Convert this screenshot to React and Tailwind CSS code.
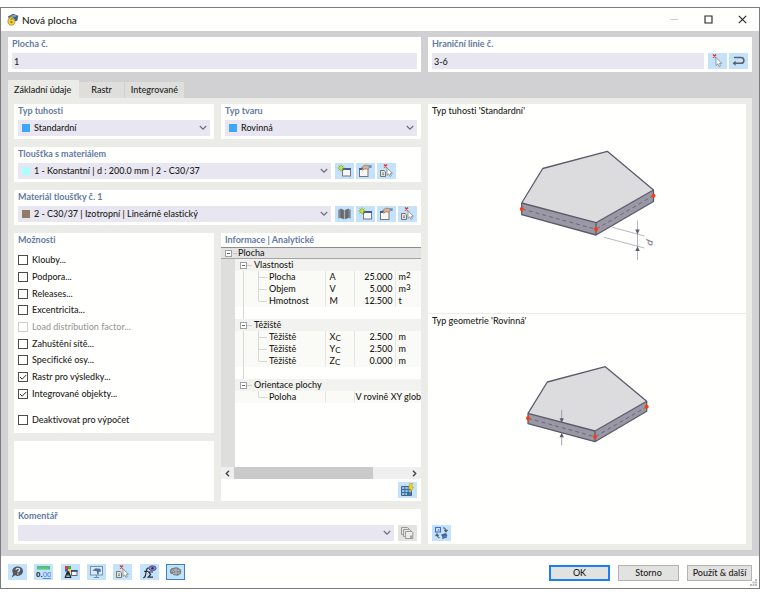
import { useState } from "react";

const OPTIONS = [
  { label: "Klouby..." },
  { label: "Podpora..." },
  { label: "Releases..." },
  { label: "Excentricita..." },
  { label: "Load distribution factor...", disabled: true },
  { label: "Zahuštění sítě..." },
  { label: "Specifické osy..." },
  { label: "Rastr pro výsledky...", checked: true },
  { label: "Integrované objekty...", checked: true },
];

const GROUPS = [
  {
    title: "Vlastnosti",
    rows: [
      { name: "Plocha", symbol: "A", value: "25.000", unit: "m", sup: "2" },
      { name: "Objem", symbol: "V", value: "5.000", unit: "m", sup: "3" },
      { name: "Hmotnost", symbol: "M", value: "12.500", unit: "t" },
    ],
  },
  {
    title: "Těžiště",
    rows: [
      { name: "Těžiště", symbol: "X", sub: "C", value: "2.500", unit: "m" },
      { name: "Těžiště", symbol: "Y", sub: "C", value: "2.500", unit: "m" },
      { name: "Těžiště", symbol: "Z", sub: "C", value: "0.000", unit: "m" },
    ],
  },
  {
    title: "Orientace plochy",
    rows: [{ name: "Poloha", text: "V rovině XY glob" }],
  },
];

/* ---------- icons ---------- */

function Icon({ children, w = 15, h = 14 }) {
  return (
    <svg width={w} height={h} viewBox={`0 0 ${w} ${h}`} fill="none" aria-hidden="true">
      {children}
    </svg>
  );
}

const AppIcon = () => (
  <Icon w={12} h={13}>
    <path d="M1 3.5 6 .8l5.3 2-1 5-2.3.5L7 5.5 2 6z" fill="#3f5f8c" />
    <path d="M3 3.2 7 1.6l3 1.2-3 1.6z" fill="#7f9cc0" />
    <path d="M5.8 3.6C3 3.4.9 5.8.9 8.6c0 2.2 1.4 3.6 3.4 3.6s3.6-1.3 3.6-3.2c0-1.7-1.2-2.8-2.6-2.8-.8 0-1.4.3-1.8.8.2-1 1-1.7 2.3-1.7z" fill="#f3d433" stroke="#9a7d17" strokeWidth=".7" />
    <circle cx="4.4" cy="9.1" r="1.1" fill="#8a7430" />
  </Icon>
);

const RedX = ({ x = 5, y = 0 }) => (
  <path d={`M${x} ${y + 0.5}l3 3m0-3l-3 3`} stroke="#ee2a20" strokeWidth="1.3" />
);

const PickIcon = () => (
  <Icon>
    <RedX x={3} />
    <path d="M6 3.5v8l1.8-1.6 1.2 2.6 1.5-.7-1.2-2.5h2.4z" fill="#fff" stroke="#7b8088" strokeWidth=".8" />
  </Icon>
);

const ReturnIcon = () => (
  <Icon>
    <path d="M3 3.5h7a2.8 2.8 0 0 1 0 5.8H3" stroke="#5c5f65" strokeWidth="1.5" />
    <path d="M4.6 6.8 1.6 9.3l3 2.5z" fill="#5c5f65" />
  </Icon>
);

const NewIcon = () => (
  <Icon>
    <rect x="5.5" y="4.5" width="8" height="7.5" fill="#f6f6f4" stroke="#77777c" />
    <path d="M5 4h9v2H5z" fill="#4a5a92" />
    <path d="M4 .5v7M.5 4h7M1.6 1.6l4.8 4.8M6.4 1.6 1.6 6.4" stroke="#7fae1c" strokeWidth="1" />
    <circle cx="4" cy="4" r="1.4" fill="#d6e820" />
  </Icon>
);

const EditIcon = () => (
  <Icon>
    <rect x="1.5" y="4.5" width="8.5" height="8" fill="#f6f6f4" stroke="#77777c" />
    <path d="M1 4h5v2H1z" fill="#4a5a92" />
    <path d="M3.5 3.6 6.5 1.2l4 .2 1 2-2 1.8-2.6-.4-2.2 1.4-1-.8 1.4-1.3z" fill="#d9b294" stroke="#7d6150" strokeWidth=".6" />
    <path d="M10.5 1.2h3.2v2.6l-2.6.2z" fill="#6d8fbd" />
  </Icon>
);

const SelectIcon = () => (
  <Icon>
    <path d="M1.5 6.5h3.6l1.4 1.4v4.6h-5z" fill="#e9e6df" stroke="#6d6a66" strokeWidth=".9" />
    <path d="M3 9h2M3 10.6h2" stroke="#6d6a66" strokeWidth=".8" />
    <RedX x={5} />
    <path d="M8 3.8v7.6l1.7-1.5 1.2 2.5 1.4-.7-1.1-2.4h2.2z" fill="#fff" stroke="#7b8088" strokeWidth=".8" />
  </Icon>
);

const LibraryIcon = () => (
  <Icon>
    <path d="M1.500 2.500h1.200v8.700H1.500zM3.200 1.500 6.900 3v9.300L3.200 10.800zM11.800 1.500 8.100 3v9.300l3.700-1.500zM12.300 2.500h1.200v8.700h-1.200z" fill="#606369" />
    <path d="M6.900 3v9.300h1.200V3z" fill="#a9b4bf" />
    <path d="M5 2.300v9.200M10 2.300v9.200" stroke="#7b7f86" strokeWidth=".5" />
  </Icon>
);

const TableIcon = () => (
  <Icon>
    <path d="M1.5 3.5h10v9h-10z" fill="#8fc4f0" stroke="#3c6490" />
    <path d="M7 9h4v3.5H7z" fill="#47729e" />
    <path d="M1.5 6.5h10M1.5 9.5h10M4.8 3.5v9M8.2 3.5v9" stroke="#3c6490" strokeWidth=".9" />
    <path d="M9.6.5h3l-.8 3.6h1.8L10.2 10l.6-4H8.6z" fill="#f6d51c" stroke="#b9971a" strokeWidth=".5" />
  </Icon>
);

const CopyIcon = () => (
  <Icon>
    <path d="M1.5 1.5h6l1.5 1.5v5.5H1.5z" fill="#e4e4e2" stroke="#9b9b99" />
    <path d="M3.5 3.5h6L11 5v5.5H3.5z" fill="#e4e4e2" stroke="#9b9b99" />
    <path d="M5.5 5.5H12l.8 1v6H5.5z" fill="#ececea" stroke="#9b9b99" />
    <path d="M10 9.5h2.4v2.6H10z" fill="#a3a3a1" />
  </Icon>
);

const HelpIcon = () => (
  <Icon>
    <path d="M7.6 1.5c3 0 5.4 1.8 5.4 4.6s-2.4 4.8-5.3 4.8c-1 0-1.8-.2-2.6-.6L1.6 12.6l1.6-3.9C2.6 8 2.3 7.1 2.3 6.1c0-2.8 2.4-4.6 5.3-4.6z" fill="#54585d" />
    <path d="M5.9 4.9c.1-1 .9-1.5 1.9-1.5s1.9.6 1.9 1.5c0 1.2-1.7 1.2-1.8 2.5M7.8 8.3v1.2" stroke="#d5e9f8" strokeWidth="1.2" />
  </Icon>
);

const UnitsIcon = () => (
  <Icon>
    <path d="M1 1h13v3.6H1z" fill="#4cc07a" />
    <path d="M3 2.5v2M5 3v1.6M7 2.5v2M9 3v1.6M11 2.5v2" stroke="#8fdcae" strokeWidth=".6" />
    <text x="0" y="12" fontSize="8" fontWeight="700" fontFamily="Liberation Sans, sans-serif" fill="#23262b">
      0.<tspan fill="#4179e0" fontWeight="400" textDecoration="underline">00</tspan>
    </text>
  </Icon>
);

const ViewIcon = () => (
  <Icon>
    <path d="M2 1h3v3H2z" fill="#e23b2e" />
    <path d="M5 1h3v3H5z" fill="#3bab3f" />
    <path d="M2 4h3v2.5H2z" fill="#3a62d8" />
    <path d="M5 4h3v2.5H5z" fill="#f2d22b" />
    <path d="M4.5 6.5 2 13M5.5 6.5 8 13M3.2 10h3.6M2.5 12.3h5M5 6v4" stroke="#25272c" strokeWidth="1.2" />
    <rect x="8.5" y="5.5" width="5.5" height="5" fill="#f6f6f4" stroke="#5b5b60" strokeWidth=".9" />
    <path d="M8 5h6.5v1.8H8z" fill="#36457c" />
  </Icon>
);

const DisplayIcon = () => (
  <Icon>
    <rect x="1.5" y="1.5" width="12" height="8.500" fill="#d9ecfa" stroke="#7590aa" />
    <path d="M5 12.500h5M7.500 10v2.500" stroke="#7590aa" strokeWidth="1.2" />
    <path d="M3 6 6.500 3.200 11.500 3.800 12 6.500 9.800 7v2.200H8.200L8 6.400 5.600 5.800z" fill="#4f7195" />
  </Icon>
);

const FormulaIcon = () => (
  <Icon>
    <path d="M6.8 3.2C5.2 2.6 4.7 4 4.4 5.5L3.3 11c-.3 1.3-1 1.8-2 1.4M2.2 6.3h4" stroke="#2b2d33" strokeWidth="1.2" />
    <path d="M11 7H6.600l2 2.500-2.400 2.700H11" stroke="#2b2d33" strokeWidth="1.2" />
    <ellipse cx="10.5" cy="3.2" rx="3.6" ry="2.4" fill="#8e8fc9" stroke="#45477e" strokeWidth=".9" />
    <circle cx="10.5" cy="3.2" r="1.2" fill="#2b2c58" />
  </Icon>
);

const BrainIcon = () => (
  <Icon>
    <path d="M1.8 6.5C1.8 4 3.8 2.6 6 2.8c1.5-.8 4-.6 5.2.6 1.6.4 2.3 2 2 3.4.3 1.7-.8 2.9-2.2 2.9-.6 1.2-2.2 1.5-3.2.6-1.4.6-2.8 0-3.2-1.2-1.7.2-2.8-.9-2.8-2.6z" fill="#7d8085" />
    <path d="M3.5 6.2c1-.9 2-.3 2 .8M5.5 4.5c1 0 1.5.7 1.3 1.5M8 3.5v6M9.3 5.2c1-.6 1.8 0 1.7.9M9.500 8c.8.500 1.700.2 2-.6M5 8.600c.7-.7 1.600-.4 1.900.3" stroke="#d5e9f8" strokeWidth=".8" />
  </Icon>
);

const SwapIcon = () => (
  <Icon>
    <rect x="1.5" y="1.5" width="5" height="4.5" fill="#dcebfb" stroke="#3c6fd6" strokeWidth="1.1" />
    <path d="m3 4.500 1.500-1.600L6 4.500z" fill="#3c6fd6" />
    <path d="M9 1.800c2.200 0 3 1.200 3 3M10.300 4.200 12 6.200l1.500-2z" stroke="#55585e" strokeWidth="1" fill="#55585e" fillOpacity=".5" />
    <path d="M3 8.800c0 2 .8 3 2.600 3M1.600 9.600 3 7.600l1.500 2z" stroke="#55585e" strokeWidth="1" fill="#55585e" fillOpacity=".5" />
    <path d="m7 8.500 5-1.500 1.500 2.500-5 1.800zM8 11.600l5-1.600v1.500l-4.500 1.500z" fill="#4666a5" />
  </Icon>
);

const Chevron = () => (
  <svg className="pointer-events-none absolute right-[3px] top-[5px]" width="8" height="6" viewBox="0 0 8 6" fill="none" aria-hidden="true">
    <path d="m.8 1 3.200 3.200L7.200 1" stroke="#6c6c74" strokeWidth="1.1" />
  </svg>
);

/* ---------- small building blocks ---------- */

function IconButton({ label, children, tone = "bg-[#c4e3fa]" }) {
  return (
    <button type="button" aria-label={label} className={`flex h-4 w-[19px] shrink-0 items-center justify-center ${tone}`}>
      {children}
    </button>
  );
}

function Panel({ title, htmlFor, className = "", children }) {
  return (
    <section className={`bg-[#fffffd] px-1 pb-[3px] ${className}`}>
      <label htmlFor={htmlFor} className="block h-4 leading-[14px] font-bold text-[#647ba3]">{title}</label>
      {children}
    </section>
  );
}

function TextField({ id, value }) {
  return (
    <input id={id} defaultValue={value} className="h-4 w-full min-w-0 flex-1 bg-[#e8e6f1] px-[2px] text-[#1d1d20] outline-none" />
  );
}

function Dropdown({ id, value, swatch }) {
  return (
    <div className="relative min-w-0 flex-1 bg-[#e8e6f1]">
      {swatch && <span className={`absolute left-1 top-1 size-2 ${swatch}`} />}
      <select id={id} className="block h-4 w-full appearance-none bg-transparent pl-4 pr-3 outline-none">
        <option>{value}</option>
      </select>
      <Chevron />
    </div>
  );
}

function CheckRow({ label, checked = false, disabled = false }) {
  return (
    <label className={`flex items-center gap-1 ${disabled ? "text-[#9a9a9a]" : ""}`}>
      <span className="grid size-[10px] shrink-0">
        <input
          type="checkbox"
          defaultChecked={checked}
          disabled={disabled}
          className="peer col-start-1 row-start-1 size-[10px] appearance-none border border-[#4c4c4c] bg-white disabled:border-[#cfcfcf]"
        />
        <svg className="pointer-events-none invisible col-start-1 row-start-1 peer-checked:visible" width="10" height="10" viewBox="0 0 10 10" fill="none">
          <path d="m2 5 2.200 2.200L8.200 3" stroke="#2f2f2f" />
        </svg>
      </span>
      {label}
    </label>
  );
}

/* ---------- property tree ---------- */

function Toggle({ label }) {
  return (
    <button type="button" aria-label={label} className="flex size-[7px] shrink-0 items-center justify-center border border-[#a0a0a0] bg-white">
      <span className="h-px w-[3px] bg-[#666]" />
    </button>
  );
}

function Branch({ last, deep }) {
  return (
    <svg className="shrink-0" width="32" height="12" viewBox="0 0 32 12" fill="none" stroke="#d8d8d6" aria-hidden="true">
      {deep && <path d="M8.500 0v12" />}
      <path d={last ? "M23.500 0v6.500H32" : "M23.500 0v12M23.500 6.500H32"} />
    </svg>
  );
}

function PropertyTree() {
  return (
    <div className="flex-1 overflow-hidden bg-[linear-gradient(to_right,#dededd_14px,#fffffd_14px)]">
      <table className="w-full table-fixed border-collapse text-left leading-3">
        <colgroup>
          <col className="w-[14px]" />
          <col className="w-[90px]" />
          <col className="w-[29px]" />
          <col className="w-[41px]" />
          <col />
        </colgroup>
        <tbody>
          <tr className="h-3 bg-[#e3e3e3] shadow-[inset_0_1px_#8d8d8d,inset_0_-1px_#a5a5a5]">
            <th colSpan={5} className="p-0 font-medium">
              <div className="flex h-3 items-center pl-1">
                <Toggle label="Plocha" />
                <span className="ml-px h-px w-1 bg-[#c4c4c4]" />
                <span className="pl-px">Plocha</span>
              </div>
            </th>
          </tr>
          {GROUPS.map((group, i) => (
            <Group key={group.title} group={group} last={i === GROUPS.length - 1} />
          ))}
        </tbody>
      </table>
    </div>
  );
}

function Group({ group, last }) {
  return (
    <>
      <tr className="h-3">
        <td className="p-0" />
        <th colSpan={4} className="bg-[#f2f2f0] p-0 font-medium">
          <div className="flex h-3 items-center pl-[5px]">
            <Toggle label={group.title} />
            <span className="h-px w-[5px] bg-[#cfcfcd]" />
            <span className="pl-[2px]">{group.title}</span>
          </div>
        </th>
      </tr>
      {group.rows.map((row, i) => (
        <tr key={i} className="h-3">
          <td className="p-0" />
          <td className="bg-[#fafaf6] p-0">
            <div className="flex h-3 items-center gap-[2px]">
              <Branch deep={!last} last={i === group.rows.length - 1} />
              {row.name}
            </div>
          </td>
          <td className="border-l border-[#e6e6e4] bg-[#fafaf6] p-0 pl-1">
            <div className="h-3">
              {row.symbol}
              {row.sub && <sub className="bottom-[-1px] text-[8px] leading-none">{row.sub}</sub>}
            </div>
          </td>
          {row.text ? (
            <td colSpan={2} className="border-l border-[#e6e6e4] bg-[#fafaf6] p-0 pl-px">
              <div className="h-3 whitespace-nowrap">{row.text}</div>
            </td>
          ) : (
            <>
              <td className="border-l border-[#e6e6e4] bg-[#fafaf6] p-0 pr-[2px] text-right">{row.value}</td>
              <td className="border-l border-[#e6e6e4] bg-[#fafaf6] p-0 pl-[3px]">
                <div className="h-3">
                  {row.unit}
                  {row.sup && <sup className="top-[-2px] text-[8px] leading-none">{row.sup}</sup>}
                </div>
              </td>
            </>
          )}
        </tr>
      ))}
      {!last && (
        <tr className="h-3">
          <td className="p-0" />
          <td colSpan={4} className="p-0">
            <div className="ml-2 h-3 w-px bg-[#d8d8d6]" />
          </td>
        </tr>
      )}
    </>
  );
}

function Scrollbar() {
  return (
    <div className="flex h-3 items-center bg-[#efefef]">
      <button type="button" aria-label="Doleva" className="flex w-[13px] justify-center">
        <svg width="5" height="7" viewBox="0 0 5 7" fill="none"><path d="M4 .8 1.300 3.500 4 6.200" stroke="#444" strokeWidth="1.4" /></svg>
      </button>
      <div className="flex h-full flex-1">
        <span className="h-full w-4/5 bg-[#cacaca]" />
      </div>
      <button type="button" aria-label="Doprava" className="flex w-[13px] justify-center">
        <svg width="5" height="7" viewBox="0 0 5 7" fill="none"><path d="M1 .8 3.700 3.500 1 6.200" stroke="#444" strokeWidth="1.4" /></svg>
      </button>
    </div>
  );
}

/* ---------- plate drawings ---------- */

function PlateStiffness() {
  return (
    <svg className="mx-auto block" width="160" height="130" viewBox="507 140 160 130" fill="none" strokeLinejoin="round" aria-hidden="true">
      <path d="M521.700 203 596 222.700V235l-74.300-20.300z" fill="#9a98a5" />
      <path d="M596 222.700 653.500 190v11.500L596 235z" fill="#9a98a5" />
      <path d="m542.700 168.500 64.600-17.200 46.200 38.700L596 222.700 521.700 203z" fill="#dcdcdf" />
      <path d="m542.700 168.500 64.600-17.200 46.200 38.700v11.500L596 235l-74.300-20.300V203zM521.700 203 596 222.700 653.500 190M596 222.700V235" stroke="#5d5a6b" strokeWidth="1.3" />
      <path d="m522 209 74 20.300 57-33.500" stroke="#5d5a6b" strokeWidth=".8" strokeDasharray="4 3" />
      <path d="m612.500 227.300 32 8.700M604 237.300l40.300 10.700M637.500 220.500V260" stroke="#a5a3ae" strokeWidth=".8" />
      <path d="m635.300 229.500 2.200 4.700 2.200-4.700zM635.300 251l2.200-4.700 2.200 4.700z" fill="#5d5a6b" />
      <circle cx="521.7" cy="209" r="2" fill="#ff3b0a" />
      <circle cx="596" cy="229.300" r="2" fill="#ff3b0a" />
      <circle cx="653.5" cy="195.700" r="2" fill="#ff3b0a" />
      <text x="652" y="246" transform="rotate(-75 652 246)" fontSize="10" fontStyle="italic" fill="#7d7b88">d</text>
    </svg>
  );
}

function PlateGeometry() {
  return (
    <svg className="mx-auto block" width="160" height="110" viewBox="507 350 160 110" fill="none" strokeLinejoin="round" aria-hidden="true">
      <path d="M528 413.300 595 431v10.700l-67-18z" fill="#9a98a5" />
      <path d="M595 431 646.700 401.300v10L595 441.700z" fill="#9a98a5" />
      <path d="m547.300 382 58-15.300 41.400 34.600L595 431l-67-17.700z" fill="#dcdcdf" />
      <path d="m547.300 382 58-15.300 41.400 34.600v10L595 441.700l-67-18v-10.400zM528 413.300 595 431l51.700-29.700M595 431v10.700" stroke="#5d5a6b" strokeWidth="1.3" />
      <path d="m528 418.300 67 18.500 51.700-30" stroke="#5d5a6b" strokeWidth=".8" strokeDasharray="4 3" />
      <path d="M561.700 410v10M561.700 436v9.500" stroke="#8e8c99" strokeWidth=".8" />
      <path d="m559.500 418.300 2.200 4.500 2.200-4.500zM559.500 437.300l2.200-4.500 2.200 4.500z" fill="#5d5a6b" />
      <circle cx="528" cy="418.300" r="2" fill="#ff3b0a" />
      <circle cx="595" cy="437" r="2" fill="#ff3b0a" />
      <circle cx="646.7" cy="406.700" r="2" fill="#ff3b0a" />
    </svg>
  );
}

/* ---------- dialog ---------- */

const TABS = ["Základní údaje", "Rastr", "Integrované"];

export default function App() {
  const [tab, setTab] = useState(TABS[0]);

  return (
    <main className="mt-[7px] border border-[#7c7c7e] bg-[#fffffd] font-['Lato','Noto_Sans',sans-serif] text-[9px] font-medium leading-3 text-[#1d1d20] [font-variant-ligatures:none]">
      {/* Title bar */}
      <header className="flex h-[23px] items-center pl-[6px] pr-3">
        <AppIcon />
        <h1 className="ml-[3px] flex-1 text-[10px] font-medium">Nová plocha</h1>
        <div className="flex items-center gap-[25px]">
          <button type="button" aria-label="Minimalizovat"><Icon w={9} h={9}><path d="M.5 4.500h8" stroke="#cfcfcf" /></Icon></button>
          <button type="button" aria-label="Maximalizovat"><Icon w={9} h={9}><path d="M1 1h7v7H1z" stroke="#222" strokeWidth="1.1" /></Icon></button>
          <button type="button" aria-label="Zavřít"><Icon w={9} h={9}><path d="m.8.8 7.400 7.400m0-7.400L.8 8.200" stroke="#222" strokeWidth="1.1" /></Icon></button>
        </div>
      </header>

      <div className="bg-[#d1d1d4] px-[7px] pb-[6px] pt-[6px]">
        <div className="grid grid-cols-[minmax(0,413fr)_minmax(0,324fr)] gap-[7px]">
          <Panel title="Plocha č." htmlFor="surface-no">
            <div className="flex"><TextField id="surface-no" value="1" /></div>
          </Panel>
          <Panel title="Hraniční linie č." htmlFor="lines-no">
            <div className="flex gap-[2px]">
              <TextField id="lines-no" value="3-6" />
              <span className="w-0" />
              <IconButton label="Vybrat linie"><PickIcon /></IconButton>
              <IconButton label="Obrátit"><ReturnIcon /></IconButton>
            </div>
          </Panel>
        </div>

        {/* Tabs */}
        <div role="tablist" className="mt-2 flex h-[18px] items-end">
          {TABS.map((name) => (
            <button
              key={name}
              type="button"
              role="tab"
              aria-selected={tab === name}
              onClick={() => setTab(name)}
              className={tab === name ? "h-[18px] bg-[#ebebe8] pl-[6px] pr-2 pt-[2px]" : "h-4 border-r border-[#d1d1d4] bg-[#dededd] px-[6px] nth-2:px-3"}
            >
              {name}
            </button>
          ))}
        </div>

        <div className="grid grid-cols-[minmax(0,407fr)_minmax(0,318fr)] gap-[7px] bg-[#ebebe8] px-[6px] pb-[6px] pt-[6px]">
          <div className="grid grid-cols-2 gap-x-[7px] gap-y-[8px]">
            <Panel title="Typ tuhosti" htmlFor="stiffness">
              <Dropdown id="stiffness" value="Standardní" swatch="bg-[#3fa5ff]" />
            </Panel>
            <Panel title="Typ tvaru" htmlFor="shape">
              <Dropdown id="shape" value="Rovinná" swatch="bg-[#3fa5ff]" />
            </Panel>

            <Panel title="Tloušťka s materiálem" htmlFor="thickness" className="col-span-2">
              <div className="flex gap-[2px]">
                <Dropdown id="thickness" value="1 - Konstantní | d : 200.0 mm | 2 - C30/37" swatch="bg-[#adfdfd]" />
                <span className="w-0" />
                <IconButton label="Nová tloušťka"><NewIcon /></IconButton>
                <IconButton label="Upravit tloušťku"><EditIcon /></IconButton>
                <IconButton label="Vybrat tloušťku"><SelectIcon /></IconButton>
                <span className="w-[19px]" />
              </div>
            </Panel>

            <Panel title="Materiál tloušťky č. 1" htmlFor="material" className="col-span-2">
              <div className="flex gap-[2px]">
                <Dropdown id="material" value="2 - C30/37 | Izotropní | Lineárně elastický" swatch="bg-[#8f7d66]" />
                <span className="w-0" />
                <IconButton label="Knihovna"><LibraryIcon /></IconButton>
                <IconButton label="Nový materiál"><NewIcon /></IconButton>
                <IconButton label="Upravit materiál"><EditIcon /></IconButton>
                <IconButton label="Vybrat materiál"><SelectIcon /></IconButton>
              </div>
            </Panel>

            <div className="flex flex-col gap-[8px]">
              <section className="bg-[#fffffd] px-1 pb-[7px]">
                <h2 className="h-[19px] leading-[14px] font-bold text-[#647ba3]">Možnosti</h2>
                <div className="grid h-[150px] auto-rows-fr">
                  {OPTIONS.map((o) => <CheckRow key={o.label} {...o} />)}
                </div>
                <div className="mt-3"><CheckRow label="Deaktivovat pro výpočet" /></div>
              </section>
              <section className="min-h-[60px] flex-1 bg-[#fffffd]" />
            </div>

            <section className="flex flex-col bg-[#fffffd]">
              <h2 className="h-[14px] pl-1 leading-[14px] font-bold text-[#647ba3]">Informace | Analytické</h2>
              <PropertyTree />
              <Scrollbar />
              <div className="flex justify-end px-1 py-[3px]">
                <IconButton label="Tabulka"><TableIcon /></IconButton>
              </div>
            </section>

            <Panel title="Komentář" htmlFor="comment" className="col-span-2">
              <div className="flex gap-1">
                <Dropdown id="comment" value="" />
                <IconButton label="Kopírovat" tone="bg-[#e3e3e1]"><CopyIcon /></IconButton>
              </div>
            </Panel>
          </div>

          {/* Previews */}
          <div className="flex flex-col bg-[#fffffd]">
            <figure className="border-b border-[#ebebe8] px-1 pb-[43px]">
              <figcaption className="h-9 leading-[14px]">Typ tuhosti 'Standardní'</figcaption>
              <PlateStiffness />
            </figure>
            <figure className="px-1">
              <figcaption className="h-9 leading-[14px]">Typ geometrie 'Rovinná'</figcaption>
              <PlateGeometry />
            </figure>
            <div className="mt-auto px-1 pb-[3px]">
              <IconButton label="Přepnout zobrazení"><SwapIcon /></IconButton>
            </div>
          </div>
        </div>
      </div>

      {/* Footer */}
      <footer className="relative flex h-8 items-center px-[7px]">
        <div className="flex w-[177px] justify-between">
          <IconButton label="Nápověda"><HelpIcon /></IconButton>
          <IconButton label="Jednotky"><UnitsIcon /></IconButton>
          <IconButton label="Zobrazení"><ViewIcon /></IconButton>
          <IconButton label="Vykreslení"><DisplayIcon /></IconButton>
          <IconButton label="Vybrat objekt"><SelectIcon /></IconButton>
          <IconButton label="Vzorce"><FormulaIcon /></IconButton>
          <IconButton label="Asistent" tone="bg-[#c4e3fa] border border-[#3b82c4]"><BrainIcon /></IconButton>
        </div>
        <div className="ml-auto flex gap-2 pt-[2px]">
          <button type="button" className="h-4 w-[61px] border-2 border-[#1a7ff0] bg-[#e2e2e1] leading-3">OK</button>
          <button type="button" className="h-4 w-[61px] border border-[#b3b3b3] bg-[#e2e2e1]">Storno</button>
          <button type="button" className="h-4 w-[65px] border border-[#b3b3b3] bg-[#e2e2e1] whitespace-nowrap">Použít &amp; další</button>
        </div>
        {/* resize grip */}
        <svg className="absolute bottom-[2px] right-[2px]" width="7" height="7" viewBox="0 0 7 7" fill="#bdbdbd" aria-hidden="true">
          <path d="M5 0h2v2H5zM2.500 2.500h2v2h-2zM5 2.500h2v2H5zM0 5h2v2H0zM2.500 5h2v2h-2zM5 5h2v2H5z" />
        </svg>
      </footer>
    </main>
  );
}
